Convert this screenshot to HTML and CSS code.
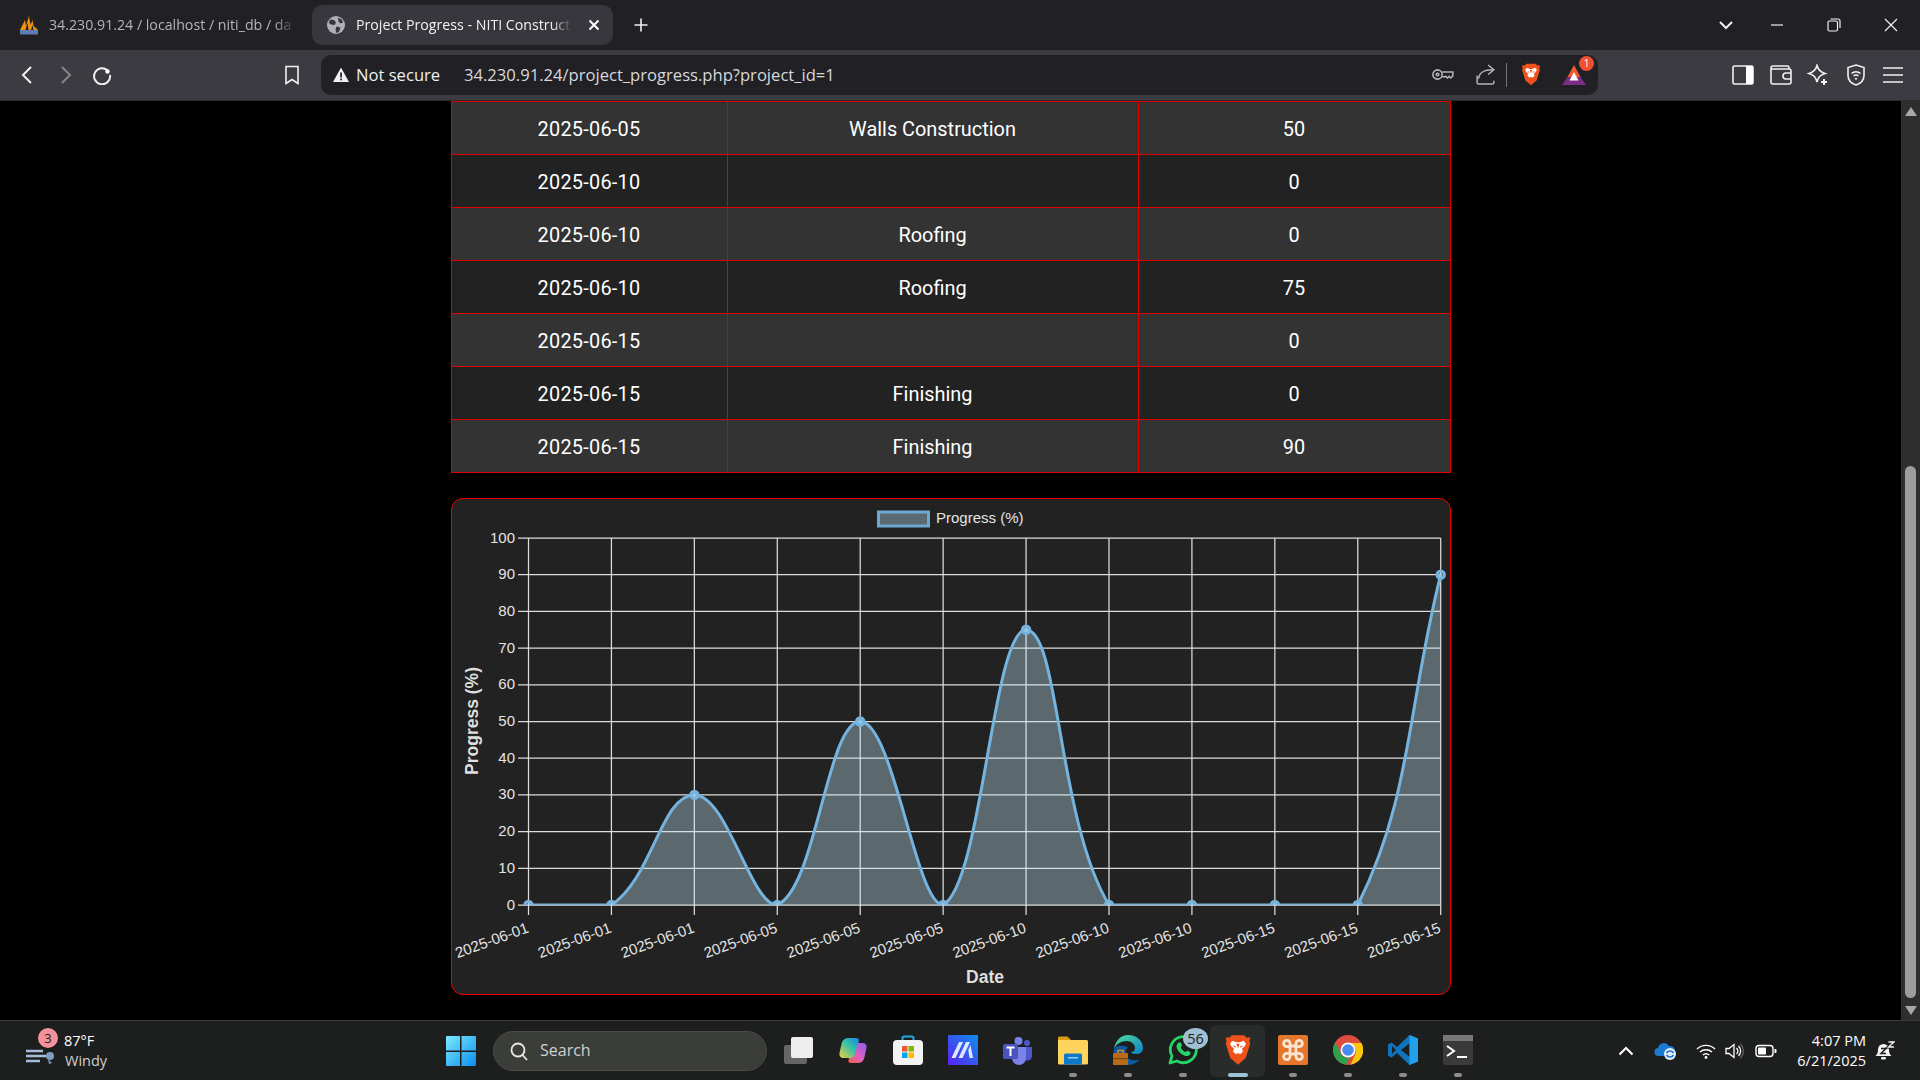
FILE: index.html
```html
<!DOCTYPE html>
<html lang="en">
<head>
    <meta charset="UTF-8">
    <meta name="viewport" content="width=device-width, initial-scale=1.0">
    <title>Project Progress - NITI Construction</title>
    <link rel="stylesheet" href="styles.css">
</head>
<body>
    <svg class="defs" width="0" height="0">
        <symbol id="brave" viewBox="0 0 24 28">
            <path fill="#f0521c" d="M6.500 1h11l2 2.300 2.300-.5 1 1.200-.8 2.200.6 1.800-.4 2-3.200 10.200c-.4 1.200-1.300 1.900-2.300 2.600L12 27l-4.700-4.200c-1-.7-1.900-1.400-2.300-2.600L1.800 10l-.4-2 .6-1.800-.8-2.200 1-1.200 2.300.5z"/>
            <path fill="#fff" d="M7 6l3.500 1.300h3L17 6l2 2.500-1 2-2.500 2.500.8 2.500-2.300 2-2-.6-2 .6-2.300-2 .8-2.500L6 10.500l-1-2z"/>
            <path fill="#f0521c" d="M7.500 10l2.500.8-.4 1.400zM16.500 10l-2.500.8.4 1.400zM10.500 8.500h3l-1.500 4zM9 19.300l3-1 3 1-3 3z"/>
        </symbol>
    </svg>

    <div class="tabstrip">
        <div class="tab">
            <svg class="favicon" viewBox="0 0 20 20">
                <path fill="#f29111" d="M1 15L6 5l1 6 3-10 1.500 9 2-5 1 6L19 15z"/>
                <path fill="#202025" d="M6.500 15l2-7 1 7zM12 15l1.500-5 1 5z"/>
                <rect x="1" y="15" width="18" height="4.500" fill="#5e7bb5"/>
            </svg>
            <span class="tab-title">34.230.91.24 / localhost / niti_db / da</span>
        </div>
        <div class="tab active">
            <svg class="favicon" viewBox="0 0 20 20">
                <circle cx="10" cy="10" r="9" fill="#aeb0b5"/>
                <path fill="#36363c" d="M4 4.500l4 .5 2 2.500-1.500 2.500L5 9.500 2.800 8zM12 2.500l4 2.300 1 3-3 .5-1.500-2zM10.500 11.500l4 1-1.500 4.500-2.500 1-1-3.500z"/>
            </svg>
            <span class="tab-title">Project Progress - NITI Construct</span>
            <svg class="tab-close" viewBox="0 0 12 12"><path d="M1.500 1.500l9 9M10.500 1.500l-9 9"/></svg>
        </div>
        <svg class="new-tab" viewBox="0 0 14 14"><path d="M7 .5v13M.5 7h13"/></svg>
        <div class="window-btns">
            <svg class="win-icon tabs-menu" viewBox="0 0 14 14"><path d="M1 4l6 6 6-6" stroke-width="2"/></svg>
            <svg class="win-icon" viewBox="0 0 14 14"><path d="M1 7h12"/></svg>
            <svg class="win-icon" viewBox="0 0 14 14"><rect x="1" y="3" width="9.500" height="10" rx="1.500"/><path d="M3.500 1h7.500a2 2 0 0 1 2 2v7"/></svg>
            <svg class="win-icon" viewBox="0 0 14 14"><path d="M1 1l12 12M13 1L1 13"/></svg>
        </div>
    </div>

    <div class="toolbar">
        <div class="nav-btns">
            <svg class="tool-icon" viewBox="0 0 20 20"><path d="M13 2l-8 8 8 8"/></svg>
            <svg class="tool-icon dim" viewBox="0 0 20 20"><path d="M7 2l8 8-8 8"/></svg>
            <svg class="tool-icon" viewBox="0 0 20 20"><path d="M16.500 6.500A8 8 0 1 0 18 10"/><circle cx="15.500" cy="6.500" r="2.200" fill="#fff" stroke="none"/></svg>
        </div>
        <svg class="tool-icon bookmark" viewBox="0 0 20 20"><path d="M4 1.500h12v17l-6-4-6 4z" stroke-width="1.600"/></svg>
        <div class="address-bar">
            <svg class="warn-icon" viewBox="0 0 18 18">
                <path fill="#f1f1f1" d="M9 1.500l8 14.500H1z"/>
                <rect x="8.200" y="6.500" width="1.700" height="5" fill="#202025"/>
                <rect x="8.200" y="12.500" width="1.700" height="1.800" fill="#202025"/>
            </svg>
            <span class="not-secure">Not secure</span>
            <span class="url">34.230.91.24/project_progress.php?project_id=1</span>
            <svg class="addr-icon key" viewBox="0 0 20 12"><circle cx="5" cy="6" r="4.200"/><circle cx="5" cy="6" r="1.200"/><path d="M9.200 3.800H19v3.400l-2 2-1.500-1.500L14 9.200l-1.500-1.500-3.300.5"/></svg>
            <svg class="addr-icon share" viewBox="0 0 20 20"><path d="M2 11v6.500A1.500 1.500 0 0 0 3.500 19h13a1.500 1.500 0 0 0 1.500-1.500V16"/><path d="M3.500 14C4 8 8 5.500 17.500 5.500"/><path d="M12.500 1l5.500 4.500-5.500 4.500"/></svg>
            <span class="addr-sep"></span>
            <svg class="addr-brave"><use href="#brave"/></svg>
            <span class="bat">
                <svg viewBox="0 0 24 22" class="bat-icon">
                    <path fill="#ef5a2f" d="M12 1l6.500 12h-13z"/>
                    <path fill="#7c2d84" d="M0 21l5.500-8h13L24 21z"/>
                    <path fill="#fff" d="M12 8l4.500 8.500h-9z"/>
                </svg>
                <span class="bat-badge">1</span>
            </span>
        </div>
        <div class="tool-right">
            <svg class="tool-icon thin" viewBox="0 0 22 22"><rect x="1" y="2" width="20" height="18" rx="1.500"/><path fill="#fff" stroke="none" d="M14 2h6a1 1 0 0 1 1 1v16a1 1 0 0 1-1 1h-6z"/></svg>
            <svg class="tool-icon thin" viewBox="0 0 22 22"><path d="M19 5V3.500A1.500 1.500 0 0 0 17.500 2H3A2 2 0 0 0 1 4v14a2 2 0 0 0 2 2h16a2 2 0 0 0 2-2V7a2 2 0 0 0-2-2H1"/><path d="M21 9h-5a2 2 0 0 0 0 6h5"/></svg>
            <svg class="tool-icon thin" viewBox="0 0 22 22"><path d="M10 1.500c1.200 4.500 3 6.500 8 8-5 1.500-6.800 3.500-8 8.500-1.200-5-3-7-8-8.500 5-1.500 6.800-3.500 8-8z"/><path d="M17 15v6M14 18h6" stroke-width="2"/></svg>
            <svg class="tool-icon thin" viewBox="0 0 22 22"><path d="M11 1l8 2.500v8c0 4.500-3.500 8-8 9.500-4.500-1.500-8-5-8-9.500v-8z"/><path d="M6.500 9.500a7 7 0 0 1 9 0M8.500 12a4 4 0 0 1 5 0"/><circle cx="11" cy="14.800" r="1" fill="#fff" stroke="none"/></svg>
            <svg class="tool-icon thin" viewBox="0 0 22 22"><path d="M1 4h20M1 11h20M1 18h20"/></svg>
        </div>
    </div>

    <div class="page">
        <main class="content">
            <table class="progress-table">
                <tr><td>2025-06-05</td><td>Walls Construction</td><td>50</td></tr>
                <tr><td>2025-06-10</td><td></td><td>0</td></tr>
                <tr><td>2025-06-10</td><td>Roofing</td><td>0</td></tr>
                <tr><td>2025-06-10</td><td>Roofing</td><td>75</td></tr>
                <tr><td>2025-06-15</td><td></td><td>0</td></tr>
                <tr><td>2025-06-15</td><td>Finishing</td><td>0</td></tr>
                <tr><td>2025-06-15</td><td>Finishing</td><td>90</td></tr>
            </table>
            <div class="chart-card">
                <svg id="chart" viewBox="452 499 998 495" width="998" height="495"></svg>
            </div>
        </main>
        <div class="scrollbar">
            <span class="arrow-up"></span>
            <span class="thumb"></span>
            <span class="arrow-down"></span>
        </div>
    </div>

    <footer class="taskbar">
        <div class="weather">
            <svg class="wind" viewBox="0 0 30 20">
                <path d="M1 6h17M1 11h22M1 16h14" stroke="#a7bcd8" stroke-width="2.400" fill="none"/>
                <circle cx="25" cy="11" r="4" fill="#7d9cc0"/>
                <path d="M23 14l1 5 3-1z" fill="#7d9cc0"/>
            </svg>
            <span class="weather-badge">3</span>
            <div class="weather-text">
                <span>87°F</span>
                <span class="dim-text">Windy</span>
            </div>
        </div>

        <div class="task-icons">
            <svg class="start" viewBox="0 0 30 30">
                <defs><linearGradient id="winBlue" x1="0" y1="0" x2="1" y2="1"><stop offset="0" stop-color="#7ceaff"/><stop offset="1" stop-color="#0c8ef0"/></linearGradient></defs>
                <path fill="url(#winBlue)" d="M0 1a1 1 0 0 1 1-1h13v14.500H0zM15.500 0H29a1 1 0 0 1 1 1v13.500H15.500zM0 16h14v14H1a1 1 0 0 1-1-1zM15.500 16H30v13a1 1 0 0 1-1 1H15.500z"/>
            </svg>
            <div class="search">
                <svg viewBox="0 0 20 20" class="search-icon"><circle cx="9" cy="9" r="6.500"/><path d="M13.500 14l4.500 5"/></svg>
                <span>Search</span>
            </div>

            <span class="task-item first">
                <svg viewBox="0 0 30 30" class="task-svg">
                    <rect x="1" y="10" width="23" height="19" rx="2" fill="#666"/>
                    <rect x="8" y="2" width="22" height="21" rx="2" fill="#eee"/>
                </svg>
            </span>
            <span class="task-item">
                <svg viewBox="0 0 30 30" class="task-svg">
                    <defs>
                        <linearGradient id="copA" x1="1" y1="0" x2="0" y2="1"><stop offset="0" stop-color="#1f7fe0"/><stop offset=".45" stop-color="#35c4a8"/><stop offset="1" stop-color="#f5cf3a"/></linearGradient>
                        <linearGradient id="copB" x1="1" y1="0" x2="0" y2="1"><stop offset="0" stop-color="#8a5cf0"/><stop offset=".55" stop-color="#e060c0"/><stop offset="1" stop-color="#f0603a"/></linearGradient>
                    </defs>
                    <path fill="url(#copB)" d="M20 28h-7c-2 0-3-1-2.500-3l4-14c.5-2 2-3 4-3h6c3 0 4.500 2 4 5l-2 9c-.7 4-3 6-6.500 6z"/>
                    <path fill="url(#copA)" d="M11 3h7c2.500 0 3.500 1.500 3 3l-4.500 14c-.6 2-2 3-4 3H6c-3.500 0-5-2-4.500-5l2-9C4.300 5 7 3 11 3z"/>
                </svg>
            </span>
            <span class="task-item">
                <svg viewBox="0 0 30 30" class="task-svg">
                    <path d="M9.500 6V3a1.500 1.500 0 0 1 1.500-1.500h8A1.500 1.500 0 0 1 20.500 3v3" fill="none" stroke="#1fa8e0" stroke-width="2"/>
                    <rect x="0" y="5" width="30" height="25" rx="4" fill="#f3f3f3"/>
                    <rect x="9" y="11" width="5.500" height="5.500" fill="#ea5a2a"/>
                    <rect x="15.500" y="11" width="5.500" height="5.500" fill="#7fb900"/>
                    <rect x="9" y="17.500" width="5.500" height="5.500" fill="#00a4ef"/>
                    <rect x="15.500" y="17.500" width="5.500" height="5.500" fill="#ffb900"/>
                </svg>
            </span>
            <span class="task-item">
                <svg viewBox="0 0 30 30" class="task-svg">
                    <defs><linearGradient id="mazeBg" x1="0" y1="1" x2="1" y2="0"><stop offset="0" stop-color="#5a22f0"/><stop offset="1" stop-color="#0e8fee"/></linearGradient></defs>
                    <rect width="30" height="30" fill="url(#mazeBg)"/>
                    <path fill="#dfe6ff" d="M3.500 23L11 7h4L7.500 23zM10.500 23L18 7h4l-7.500 16z"/>
                    <path fill="#dfe6ff" d="M22.500 10l2.500 13h-3.500l-1.200-8z"/>
                </svg>
            </span>
            <span class="task-item">
                <svg viewBox="0 0 30 30" class="task-svg">
                    <circle cx="15.500" cy="6" r="4" fill="#7b83eb"/>
                    <circle cx="24" cy="8" r="3" fill="#5059c9"/>
                    <path fill="#5059c9" d="M20 12h9v9a4.500 4.500 0 0 1-9 0z"/>
                    <path fill="#7b83eb" d="M9 12h14v11a7 7 0 0 1-14 0z"/>
                    <rect x="0" y="9" width="15" height="15" rx="1.500" fill="#4b53bc"/>
                    <path d="M3.500 12.500h8M7.500 12.500V21" stroke="#fff" stroke-width="2" fill="none"/>
                </svg>
            </span>
            <span class="task-item has-dot">
                <svg viewBox="0 0 30 30" class="task-svg">
                    <path fill="#d99a0e" d="M0 3a1.500 1.500 0 0 1 1.500-1.500h8l3.500 3.500H0z"/>
                    <path fill="#ffd45c" d="M0 5h28.500a1.500 1.500 0 0 1 1.500 1.500V28a1.500 1.500 0 0 1-1.500 1.500h-27A1.500 1.500 0 0 1 0 28z"/>
                    <path fill="#0f78c8" d="M6 20a1.500 1.500 0 0 1 1.500-1.500h15A1.500 1.500 0 0 1 24 20v9.500H6z"/>
                    <rect x="10" y="22" width="10" height="1.500" fill="#8fd0f5"/>
                </svg>
            </span>
            <span class="task-item has-dot">
                <svg viewBox="0 0 30 30" class="task-svg">
                    <defs><linearGradient id="edgeG" x1="0" y1="0" x2="1" y2="1"><stop offset="0" stop-color="#4fdc9a"/><stop offset="1" stop-color="#0c7fc9"/></linearGradient></defs>
                    <path fill="url(#edgeG)" d="M15 0c9 0 15 6 15 13 0 4-3 6-7 6-3 0-5-1-5-2 3 0 4-2 4-4 0-4-4-7-8-7C8 6 3 9 1 14 2 6 8 0 15 0z"/>
                    <path fill="#0c59a4" d="M1 14c-2 8 4 16 13 16 5 0 10-2 13-6-3 2-9 2-12-1-3-3-3-8 0-11C9 10 3 10 1 14z"/>
                    <rect x="0" y="18" width="15" height="12" rx="1" fill="#b86a18"/>
                    <path d="M5 18v-2.500h5V18" fill="none" stroke="#d48a2a" stroke-width="1.500"/>
                    <rect x="0" y="23" width="15" height="1.200" fill="#7a4510"/>
                </svg>
            </span>
            <span class="task-item has-dot">
                <svg viewBox="0 0 30 30" class="task-svg">
                    <path d="M2 28l2-7A13 13 0 1 1 9 26z" fill="none" stroke="#25d366" stroke-width="2.800" stroke-linejoin="round"/>
                    <path fill="#25d366" d="M10 8c1-1 2.500-1 3 0l1 2.500-1.200 2c1 2 2.500 3.500 4.500 4.500l2-1.200 2.500 1c1 .5 1 2 0 3-2 2-5 1.500-8-.5-3-2-5-5-5.300-7.500 0-1.500.7-3 1.500-3.800z"/>
                </svg>
                <span class="count-badge">56</span>
            </span>
            <span class="task-item active">
                <svg class="task-svg brave-task"><use href="#brave"/></svg>
            </span>
            <span class="task-item has-dot">
                <svg viewBox="0 0 30 30" class="task-svg">
                    <rect width="30" height="30" rx="2" fill="#e4772c"/>
                    <path fill="none" stroke="#fbe4d2" stroke-width="2.800" d="M12 11h6V8.500a3.200 3.200 0 1 1 3.200 3.200H18v6.600h3.200a3.200 3.200 0 1 1-3.200 3.200V19h-6v2.500a3.200 3.200 0 1 1-3.200-3.200H12v-6.600H8.800A3.200 3.200 0 1 1 12 8.500z"/>
                </svg>
            </span>
            <span class="task-item has-dot">
                <svg viewBox="0 0 30 30" class="task-svg">
                    <circle cx="15" cy="15" r="15" fill="#dd4c3f"/>
                    <path fill="#f8c70a" d="M15 8h13.500a15 15 0 0 1-11 21.800l5-11.300a8 8 0 0 0-7.500-10.500z"/>
                    <path fill="#2ba24c" d="M2 7.500l7 13c2 2 5 3 8 1.500l-4 7.700A15 15 0 0 1 2 7.500z"/>
                    <circle cx="15" cy="15" r="7.500" fill="#fff"/>
                    <circle cx="15" cy="15" r="5.800" fill="#4a8af4"/>
                </svg>
            </span>
            <span class="task-item has-dot">
                <svg viewBox="0 0 30 30" class="task-svg">
                    <path fill="#0f73bd" d="M21.500 0L9 12 3.500 7.500 0 9.500v11l3.500 2L9 18l12.500 12 8.500-3.500V3.500zM21.500 8.500v13L13 15zM4 11l4 4-4 4z"/>
                    <path fill="#22a0ea" d="M21.500 0L30 3.500v23L21.500 30z"/>
                </svg>
            </span>
            <span class="task-item has-dot">
                <svg viewBox="0 0 30 30" class="task-svg">
                    <rect width="30" height="30" rx="2.500" fill="#3a3a3a"/>
                    <rect width="30" height="6" fill="#777"/>
                    <path d="M4 11l7 5-7 5" fill="none" stroke="#fff" stroke-width="2"/>
                    <path d="M14 22h10" stroke="#fff" stroke-width="2"/>
                </svg>
            </span>
        </div>

        <div class="tray">
            <svg class="tray-icon chevron" viewBox="0 0 16 10"><path d="M1.500 8.500L8 2l6.500 6.500" fill="none" stroke="#fff" stroke-width="2"/></svg>
            <svg class="tray-icon onedrive" viewBox="0 0 24 20">
                <path fill="#1d78d2" d="M5 15a4 4 0 0 1-1-8 6 6 0 0 1 11-2 5 5 0 0 1 6 5v5z"/>
                <circle cx="16" cy="13" r="6" fill="#e8eef8"/>
                <path d="M12.500 12a4 4 0 0 1 7 0M19.500 14a4 4 0 0 1-7 0" fill="none" stroke="#1d78d2" stroke-width="1.600"/>
            </svg>
            <svg class="tray-icon wifi" viewBox="0 0 20 16"><path d="M1 6a13 13 0 0 1 18 0M4 9a9 9 0 0 1 12 0M6.800 12a5 5 0 0 1 6.400 0" fill="none" stroke="#fff" stroke-width="1.400"/><circle cx="10" cy="14.500" r="1.400" fill="#fff"/></svg>
            <svg class="tray-icon volume" viewBox="0 0 20 16"><path d="M1 5.500h3L9 1.500v13L4 10.500H1z" fill="none" stroke="#fff" stroke-width="1.300"/><path d="M11.500 5a4 4 0 0 1 0 6M13.500 3a7 7 0 0 1 0 10" fill="none" stroke="#fff" stroke-width="1.300"/><path d="M15.500 1a10 10 0 0 1 0 14" fill="none" stroke="#666" stroke-width="1.300"/></svg>
            <svg class="tray-icon battery" viewBox="0 0 22 14"><rect x="1" y="1.500" width="17" height="11" rx="3" fill="none" stroke="#fff" stroke-width="1.400"/><rect x="3" y="3.500" width="8" height="7" rx="1" fill="#fff"/><path d="M19.500 5h1a1 1 0 0 1 1 1v2a1 1 0 0 1-1 1h-1z" fill="#fff"/></svg>
            <div class="clock">
                <span>4:07 PM</span>
                <span>6/21/2025</span>
            </div>
            <svg class="tray-icon bell" viewBox="0 0 20 20">
                <path fill="#f4f4f4" d="M8.500 3a5.500 5.500 0 0 1 5.500 5.500c0 3.500.8 5 2.500 6.500H.500C2.200 13.500 3 12 3 8.500A5.500 5.500 0 0 1 8.500 3z"/>
                <rect x="6" y="16" width="5" height="2.500" rx="1.200" fill="#f4f4f4"/>
                <path d="M6 7.500h5l-5 5h5" fill="none" stroke="#1d1e1e" stroke-width="1.500"/>
                <path d="M13.500 1H19l-5.500 5H19" fill="none" stroke="#1d1e1e" stroke-width="3"/>
                <path d="M13.500 1H19l-5.500 5H19" fill="none" stroke="#f4f4f4" stroke-width="1.300"/>
            </svg>
        </div>
    </footer>

    <script src="chart.js"></script>
</body>
</html>
```

FILE: styles.css
```css
* {
    box-sizing: border-box;
}
body {
    margin: 0;
    height: 100vh;
    display: flex;
    flex-direction: column;
    overflow: hidden;
    background-color: #000;
    color: #fff;
    font-family: 'Open Sans', 'Noto Sans', sans-serif;
}
.defs {
    position: absolute;
}

/* browser chrome */
.tabstrip {
    height: 50px;
    flex: none;
    display: flex;
    align-items: center;
    background-color: #202025;
    padding-left: 19px;
    font-size: 14.200px;
}
.tab {
    width: 285px;
    height: 40px;
    display: flex;
    align-items: center;
    color: #b5b5b8;
}
.tab.active {
    width: 301px;
    margin-left: 8px;
    padding-left: 14px;
    background-color: #37373d;
    border-radius: 10px;
    color: #f1f1f1;
}
.favicon {
    width: 20px;
    height: 20px;
    flex: none;
    margin-right: 10px;
}
.tab-title {
    width: 250px;
    margin-top: -2px;
    white-space: nowrap;
    -webkit-mask-image: linear-gradient(to right, #000 90%, transparent 99%);
    mask-image: linear-gradient(to right, #000 90%, transparent 99%);
}
.tab.active .tab-title {
    width: 218px;
}
.tab-close {
    width: 12px;
    height: 12px;
    margin-left: 14px;
    fill: none;
    stroke: #fff;
    stroke-width: 2;
}
.new-tab {
    width: 14px;
    height: 14px;
    margin-left: 21px;
    fill: none;
    stroke: #f1f1f1;
    stroke-width: 1.600;
}
.window-btns {
    margin-left: auto;
    display: flex;
    align-items: center;
    gap: 43px;
    padding-right: 22px;
}
.tabs-menu {
    margin-right: -6px;
}
.win-icon {
    width: 14px;
    height: 14px;
    fill: none;
    stroke: #f1f1f1;
    stroke-width: 1.200;
}
.toolbar {
    height: 51px;
    flex: none;
    display: flex;
    align-items: center;
    background-color: #3b3b41;
    border-bottom: 1px solid #2c2c30;
    padding-bottom: 1px;
}
.nav-btns {
    display: flex;
    gap: 17px;
    padding-left: 18px;
}
.tool-icon {
    width: 20px;
    height: 20px;
    fill: none;
    stroke: #f1f1f1;
    stroke-width: 2;
}
.tool-icon.dim {
    stroke: #85858a;
}
.bookmark {
    margin-left: 170px;
}
.address-bar {
    width: 1277px;
    height: 40px;
    margin-left: 19px;
    display: flex;
    align-items: center;
    background-color: #202025;
    border-radius: 10px;
    padding-left: 11px;
    font-size: 16.600px;
}
.warn-icon {
    width: 18px;
    height: 18px;
}
.not-secure {
    width: 108px;
    margin-left: 6px;
    color: #efeff0;
}
.url {
    color: #d8d8da;
}
.addr-icon {
    fill: none;
    stroke: #b5b5b8;
    stroke-width: 1.400;
}
.key {
    width: 22px;
    height: 15px;
    margin-left: auto;
}
.share {
    width: 21px;
    height: 21px;
    margin-left: 21.500px;
}
.addr-sep {
    width: 1px;
    height: 24px;
    margin-left: 9.500px;
    background-color: #75757a;
}
.addr-brave {
    width: 20px;
    height: 25px;
    margin-left: 14.500px;
}
.bat {
    position: relative;
    margin-left: 21px;
    margin-right: 12px;
    width: 24px;
    height: 22px;
}
.bat-icon {
    width: 24px;
    height: 22px;
}
.bat-badge {
    position: absolute;
    top: -8px;
    right: -8px;
    width: 15px;
    height: 15px;
    border-radius: 50%;
    background-color: #f0502e;
    font-size: 10px;
    line-height: 15px;
    text-align: center;
}
.tool-right {
    display: flex;
    gap: 15.500px;
    padding-left: 134px;
}
.tool-icon.thin {
    width: 22px;
    height: 22px;
    stroke-width: 1.600;
}

/* page */
.page {
    flex: 1;
    min-height: 0;
    display: flex;
}
.content {
    flex: 1;
    overflow: hidden;
    display: flex;
    flex-direction: column;
    align-items: center;
}
.progress-table {
    width: 1000px;
    flex: none;
    table-layout: fixed;
    border-collapse: collapse;
    font-family: Roboto, sans-serif;
    font-size: 19.900px;
}
.progress-table td {
    height: 53px;
    padding: 2px 0 0;
    text-align: center;
    border: 1px solid #e00000;
    background-color: #222;
}
.progress-table tr:nth-child(odd) td {
    background-color: #333;
}
.progress-table td:nth-child(1) {
    width: 276px;
    letter-spacing: 0.250px;
}
.progress-table td:nth-child(2) {
    width: 411px;
}
.chart-card {
    width: 1000px;
    height: 497px;
    flex: none;
    margin-top: 25px;
    background-color: #222;
    border: 1px solid #f00000;
    border-radius: 12px;
}
#chart {
    display: block;
}
.scrollbar {
    width: 19px;
    flex: none;
    display: flex;
    flex-direction: column;
    align-items: center;
    background-color: #2e2e2e;
}
.arrow-up, .arrow-down {
    width: 0;
    height: 0;
    border-left: 6px solid transparent;
    border-right: 6px solid transparent;
}
.arrow-up {
    margin-top: 6px;
    border-bottom: 9px solid #a8a8a8;
}
.arrow-down {
    margin-top: 8px;
    border-top: 9px solid #a8a8a8;
}
.thumb {
    width: 11px;
    height: 532px;
    margin-top: 350px;
    border-radius: 6px;
    background-color: #9d9d9d;
}

/* taskbar */
.taskbar {
    height: 60px;
    flex: none;
    display: flex;
    align-items: center;
    background-color: #1d1e1e;
    border-top: 1px solid #3a3a3a;
    font-size: 14.500px;
}
.weather {
    position: relative;
    width: 446px;
    height: 100%;
    flex: none;
    display: flex;
    align-items: center;
    padding-left: 25px;
}
.wind {
    width: 30px;
    height: 20px;
    margin-top: 8px;
}
.weather-badge {
    position: absolute;
    left: 38px;
    top: 7px;
    width: 20px;
    height: 20px;
    border-radius: 50%;
    background-color: #f4919a;
    color: #222;
    font-size: 13px;
    line-height: 20px;
    text-align: center;
}
.weather-text {
    display: flex;
    flex-direction: column;
    gap: 1px;
    margin-left: 9px;
    margin-top: -1px;
    line-height: 19px;
}
.dim-text {
    color: #cfcfcf;
    padding-left: 1px;
}
.task-icons {
    display: flex;
    align-items: center;
    flex: none;
}
.start {
    width: 30px;
    height: 30px;
}
.search {
    width: 274px;
    height: 40px;
    margin-left: 17px;
    display: flex;
    align-items: center;
    padding-left: 15px;
    border-radius: 20px;
    background-color: #3b3d39;
    border: 1px solid #4a4b48;
    color: #d0d0d0;
    font-size: 16px;
}
.search span {
    margin-top: -1px;
    margin-left: -1px;
}
.search-icon {
    width: 20px;
    height: 20px;
    margin-right: 12px;
    fill: none;
    stroke: #e8e8e8;
    stroke-width: 1.800;
}
.task-item {
    position: relative;
    width: 55px;
    height: 52px;
    display: flex;
    align-items: center;
    justify-content: center;
}
.task-item.first {
    margin-left: 3px;
}
.task-svg {
    width: 30px;
    height: 30px;
    margin-bottom: 2px;
}
.brave-task {
    width: 28px;
    height: 32px;
}
.has-dot::after, .task-item.active::after {
    content: "";
    position: absolute;
    left: 24px;
    bottom: 0;
    width: 8px;
    height: 4px;
    border-radius: 2px;
    background-color: #8d8d8d;
}
.task-item.active {
    background-color: #2a2b2b;
    border-radius: 6px;
}
.task-item.active::after {
    left: 18px;
    width: 20px;
    background-color: #9ec3d8;
}
.count-badge {
    position: absolute;
    right: 2px;
    top: 3px;
    width: 25px;
    height: 21px;
    border-radius: 50%;
    background-color: #9fc0d4;
    color: #1a1a1a;
    font-size: 14.500px;
    line-height: 21px;
    text-align: center;
}
.tray {
    flex: 1;
    display: flex;
    align-items: center;
    justify-content: flex-end;
    padding-right: 25px;
}
.tray-icon {
    flex: none;
}
.chevron {
    width: 16px;
    height: 10px;
}
.onedrive {
    width: 24px;
    height: 20px;
    margin-left: 20px;
}
.wifi {
    width: 20px;
    height: 16px;
    margin-left: 18px;
}
.volume {
    width: 20px;
    height: 16px;
    margin-left: 9px;
}
.battery {
    width: 22px;
    height: 14px;
    margin-left: 10px;
}
.clock {
    display: flex;
    flex-direction: column;
    align-items: flex-end;
    width: 89px;
    line-height: 20px;
}
.bell {
    width: 20px;
    height: 20px;
    margin-left: 9px;
}
```

FILE: chart.js
```js
// draws the progress chart, same bezier math chart.js uses for tension 0.4
const values = [0, 0, 30, 0, 50, 0, 75, 0, 0, 0, 0, 90];
const labels = ['2025-06-01', '2025-06-01', '2025-06-01', '2025-06-05', '2025-06-05', '2025-06-05',
    '2025-06-10', '2025-06-10', '2025-06-10', '2025-06-15', '2025-06-15', '2025-06-15'];

const area = { left: 528.5, right: 1440.7, top: 538, bottom: 905 };
const stepX = (area.right - area.left) / (values.length - 1);
const tension = 0.4;

const points = values.map((v, i) => ({
    x: area.left + i * stepX,
    y: area.bottom - (v / 100) * (area.bottom - area.top)
}));

function clamp(v, lo, hi) {
    return Math.min(Math.max(v, lo), hi);
}

function controlPoints(i) {
    const cur = points[i];
    const prev = points[i - 1] || cur;
    const next = points[i + 1] || cur;
    const d01 = Math.hypot(cur.x - prev.x, cur.y - prev.y);
    const d12 = Math.hypot(next.x - cur.x, next.y - cur.y);
    const total = d01 + d12 || 1;
    const fa = tension * d01 / total;
    const fb = tension * d12 / total;
    return {
        inX: clamp(cur.x - fa * (next.x - prev.x), area.left, area.right),
        inY: clamp(cur.y - fa * (next.y - prev.y), area.top, area.bottom),
        outX: clamp(cur.x + fb * (next.x - prev.x), area.left, area.right),
        outY: clamp(cur.y + fb * (next.y - prev.y), area.top, area.bottom)
    };
}

let line = `M${points[0].x} ${points[0].y}`;
for (let i = 1; i < points.length; i++) {
    const a = controlPoints(i - 1);
    const b = controlPoints(i);
    line += `C${a.outX} ${a.outY} ${b.inX} ${b.inY} ${points[i].x} ${points[i].y}`;
}
const fillPath = `${line}L${area.right} ${area.bottom}L${area.left} ${area.bottom}Z`;

let svg = '';
const gridColor = '#dcdcdc';

// grid and ticks
for (let i = 0; i <= 10; i++) {
    const y = area.top + i * (area.bottom - area.top) / 10;
    svg += `<line x1="518" x2="${area.right}" y1="${y}" y2="${y}" stroke="${gridColor}" stroke-width="1.25"/>`;
    svg += `<text x="515" y="${y + 4.5}" text-anchor="end" class="tick">${100 - i * 10}</text>`;
}
points.forEach((p, i) => {
    svg += `<line x1="${p.x}" x2="${p.x}" y1="${area.top}" y2="915" stroke="${gridColor}" stroke-width="1.25"/>`;
    svg += `<text transform="translate(${p.x + 1} 932) rotate(-20)" text-anchor="end" class="tick">${labels[i]}</text>`;
});

// data
svg += '<clipPath id="plotClip"><rect x="500" y="520" width="960" height="385"/></clipPath>';
svg += '<g clip-path="url(#plotClip)">';
svg += `<path d="${fillPath}" fill="rgba(197,238,255,.35)"/>`;
svg += `<path d="${line}" fill="none" stroke="#74b4de" stroke-width="3"/>`;
points.forEach(p => {
    svg += `<circle cx="${p.x}" cy="${p.y}" r="3.75" fill="rgba(197,238,255,.35)" stroke="#74b4de" stroke-width="3"/>`;
});
svg += '</g>';

// legend and axis titles
svg += '<rect x="878.5" y="512" width="50" height="14" fill="#5b6a70" stroke="#6da9cf" stroke-width="3"/>';
svg += '<text x="936" y="523" class="tick">Progress (%)</text>';
svg += '<text transform="translate(477.5 721) rotate(-90)" text-anchor="middle" class="axis-title">Progress (%)</text>';
svg += '<text x="985" y="983" text-anchor="middle" class="axis-title">Date</text>';

document.getElementById('chart').innerHTML =
    `<style>.tick{font:15px "Liberation Sans",sans-serif;fill:#e4e4e4}.axis-title{font:bold 17.5px "Liberation Sans",sans-serif;fill:#dedede}</style>` + svg;
```
